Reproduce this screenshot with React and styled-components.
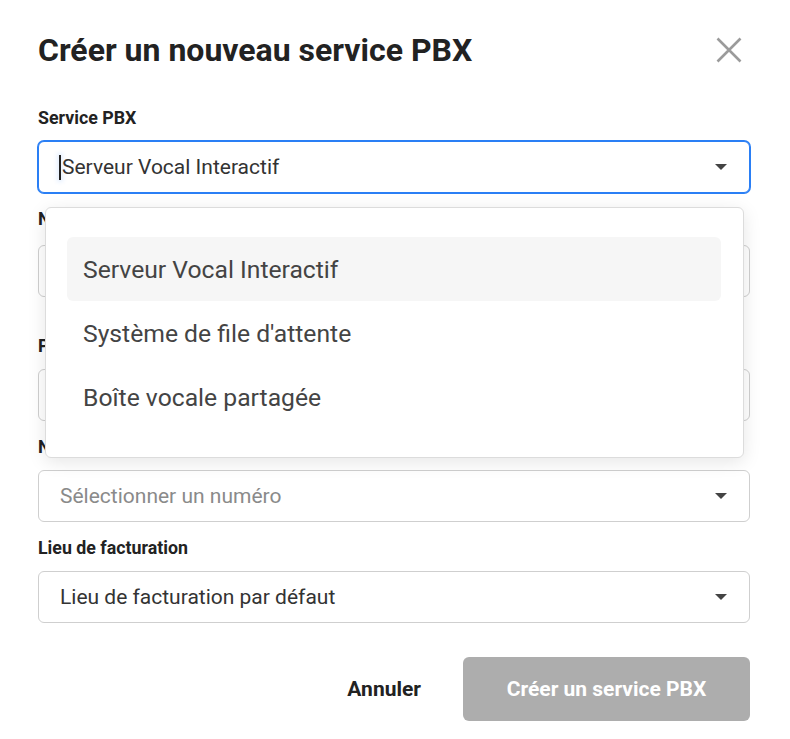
import React from "react";
import styled, { createGlobalStyle } from "styled-components";

const GlobalStyle = createGlobalStyle`
  html, body {
    margin: 0;
    padding: 0;
    background: #fff;
  }
  body {
    font-family: Roboto, "Liberation Sans", Arial, sans-serif;
    color: #222;
  }
  * {
    box-sizing: border-box;
  }
`;

const Modal = styled.div`
  width: 790px;
  padding: 31px 40px 18px 38px;
`;

const Header = styled.div`
  display: flex;
  align-items: center;
  justify-content: space-between;
`;

const Title = styled.h1`
  margin: 0;
  font-size: 32px;
  line-height: 38px;
  font-weight: 700;
  color: #222;
`;

const CloseButton = styled.button`
  width: 26px;
  height: 26px;
  margin-right: 8px;
  padding: 0;
  border: none;
  background: none;
  display: flex;
  align-items: center;
  justify-content: center;
  cursor: pointer;
`;

const Form = styled.div`
  margin-top: 37px;
`;

const Field = styled.div`
  margin-bottom: ${(p) => p.$space || 14}px;
`;

const Label = styled.div`
  font-size: 17.8px;
  line-height: 24px;
  font-weight: 700;
  color: #222;
  margin-bottom: ${(p) => p.$gap || 11}px;
`;

const SelectWrap = styled.div`
  position: relative;
`;

const SelectBox = styled.div`
  height: 52px;
  display: flex;
  align-items: center;
  justify-content: space-between;
  padding: 0 22px 0 21px;
  border: 1px solid ${(p) => (p.$focused ? "#2a7ff5" : "#cfcfcf")};
  box-shadow: ${(p) => (p.$focused ? "0 0 0 1px #2a7ff5" : "none")};
  border-radius: 6px;
  background: #fff;
`;

const Value = styled.span`
  display: flex;
  align-items: center;
  font-size: 21px;
  color: ${(p) => (p.$placeholder ? "#8a8a8a" : "#333")};
`;

const Caret = styled.span`
  display: inline-block;
  width: 2px;
  height: 25px;
  margin: 0 1px 0 -1px;
  background: #222;
  box-shadow: 0 0 4px 2px rgba(42, 127, 245, 0.12);
`;

const Arrow = styled.span`
  width: 0;
  height: 0;
  border-left: 6px solid transparent;
  border-right: 6px solid transparent;
  border-top: 6px solid #444;
`;

const Menu = styled.ul`
  position: absolute;
  top: calc(100% + 14px);
  left: 7px;
  right: 6px;
  z-index: 10;
  margin: 0;
  padding: 29px 22px 28px 21px;
  list-style: none;
  background: #fff;
  border: 1px solid #dcdcdc;
  border-radius: 6px;
  box-shadow: 0 4px 18px rgba(0, 0, 0, 0.1);
`;

const MenuItem = styled.li`
  height: 64px;
  display: flex;
  align-items: center;
  padding-left: 16px;
  border-radius: 6px;
  font-size: 24.7px;
  color: #444;
  background: ${(p) => (p.$active ? "#f6f6f6" : "transparent")};
`;

const Footer = styled.div`
  margin-top: 34px;
  display: flex;
  justify-content: flex-end;
  align-items: center;
  gap: 21px;
`;

const CancelButton = styled.button`
  height: 64px;
  padding: 0 21px;
  border: none;
  background: none;
  font-family: inherit;
  font-size: 21px;
  font-weight: 700;
  color: #222;
  cursor: pointer;
`;

const PrimaryButton = styled.button`
  height: 64px;
  width: 287px;
  border: none;
  border-radius: 6px;
  background: #adadad;
  font-family: inherit;
  font-size: 21px;
  font-weight: 700;
  color: #fff;
  cursor: not-allowed;
`;

const CloseIcon = () => (
  <svg width="26" height="26" viewBox="0 0 26 26">
    <path
      d="M1.5 1.5 L24.5 24.5 M24.5 1.5 L1.5 24.5"
      stroke="#9b9b9b"
      strokeWidth="2.6"
      fill="none"
    />
  </svg>
);

const options = [
  "Serveur Vocal Interactif",
  "Système de file d'attente",
  "Boîte vocale partagée",
];

const Select = ({ value, placeholder, focused, caret, children }) => (
  <SelectWrap>
    <SelectBox $focused={focused}>
      <Value $placeholder={!value}>
        {caret && <Caret />}
        {value || placeholder}
      </Value>
      <Arrow />
    </SelectBox>
    {children}
  </SelectWrap>
);

const App = () => {
  return (
    <>
      <GlobalStyle />
      <Modal>
        <Header>
          <Title>Créer un nouveau service PBX</Title>
          <CloseButton aria-label="Fermer">
            <CloseIcon />
          </CloseButton>
        </Header>
        <Form>
          <Field>
            <Label>Service PBX</Label>
            <Select value="Serveur Vocal Interactif" focused caret>
              <Menu>
                {options.map((o, i) => (
                  <MenuItem key={o} $active={i === 0}>
                    {o}
                  </MenuItem>
                ))}
              </Menu>
            </Select>
          </Field>
          <Field $space={37}>
            <Label $gap={14}>Nom du service</Label>
            <Select />
          </Field>
          <Field>
            <Label>Poste</Label>
            <Select />
          </Field>
          <Field>
            <Label>Numéro de téléphone</Label>
            <Select placeholder="Sélectionner un numéro" />
          </Field>
          <Field>
            <Label>Lieu de facturation</Label>
            <Select value="Lieu de facturation par défaut" />
          </Field>
        </Form>
        <Footer>
          <CancelButton>Annuler</CancelButton>
          <PrimaryButton>Créer un service PBX</PrimaryButton>
        </Footer>
      </Modal>
    </>
  );
};

export default App;
